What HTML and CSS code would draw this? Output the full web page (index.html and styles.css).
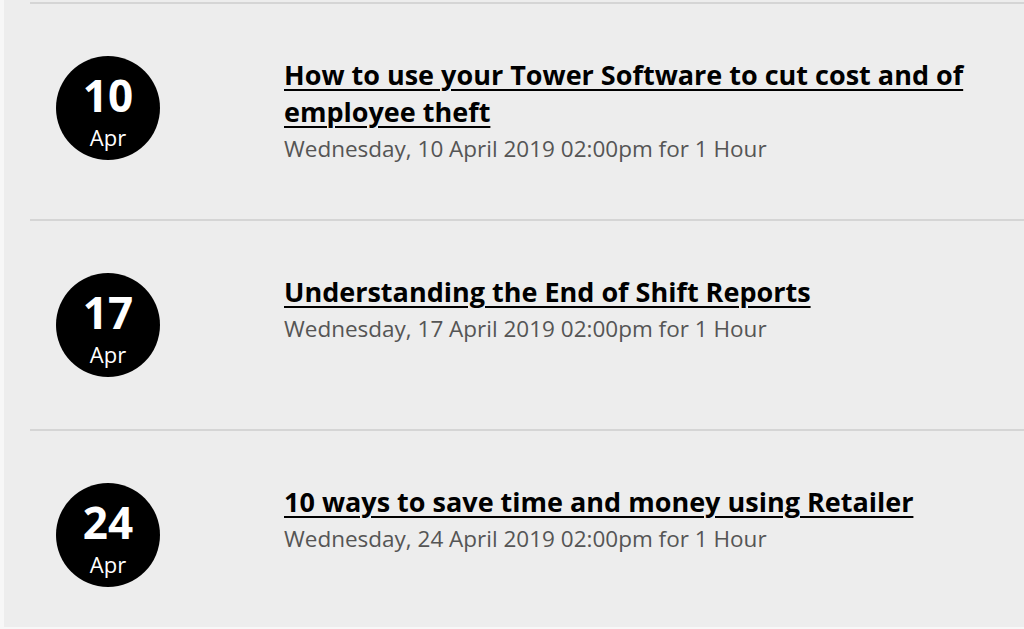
FILE: index.html
```html
<!DOCTYPE html>
<html lang="en">
<head>
  <meta charset="UTF-8" />
  <meta name="viewport" content="width=device-width, initial-scale=1.0"/>
  <title>Upcoming Webinars</title>
  <link rel="stylesheet" href="styles.css">
</head>
<body>

<div class="events">
  <div class="event">
    <div class="date">
      <span class="day">10</span>
      <span class="month">Apr</span>
    </div>
    <div class="info">
      <a href="#" class="title">How to use your Tower Software to cut cost and of employee theft</a>
      <p class="when">Wednesday, 10 April 2019 02:00pm for 1 Hour</p>
    </div>
  </div>

  <div class="event">
    <div class="date">
      <span class="day">17</span>
      <span class="month">Apr</span>
    </div>
    <div class="info">
      <a href="#" class="title">Understanding the End of Shift Reports</a>
      <p class="when">Wednesday, 17 April 2019 02:00pm for 1 Hour</p>
    </div>
  </div>

  <div class="event">
    <div class="date">
      <span class="day">24</span>
      <span class="month">Apr</span>
    </div>
    <div class="info">
      <a href="#" class="title">10 ways to save time and money using Retailer</a>
      <p class="when">Wednesday, 24 April 2019 02:00pm for 1 Hour</p>
    </div>
  </div>
</div>

</body>
</html>
```

FILE: styles.css
```css
body {
  font-family: 'Open Sans', sans-serif;
  background: #f7f7f7;
  margin: 0;
  padding: 0;
}

.events {
  margin-left: 4px;
  background: #ededed;
  padding-top: 2px;
  height: 625px;
  overflow: hidden;
}

.event {
  display: flex;
  align-items: flex-start;
  margin-left: 26px;
  padding: 52px 0 52px 26px;
  border-top: 2px solid #d5d5d5;
}

.date {
  flex: none;
  width: 104px;
  height: 104px;
  border-radius: 50%;
  background: #000;
  color: #fff;
  text-align: center;
  padding-top: 17px;
  box-sizing: border-box;
}

.date .day {
  display: block;
  font-size: 44px;
  line-height: 44px;
  font-weight: 700;
}

.date .month {
  display: block;
  margin-top: 9px;
  font-size: 22px;
  line-height: 22px;
}

.info {
  margin-left: 124px;
}

.title {
  display: block;
  color: #000;
  font-size: 27px;
  line-height: 37px;
  font-weight: 700;
  text-decoration: underline;
  text-decoration-thickness: 2px;
  text-underline-offset: 4px;
}

.when {
  margin: 0;
  color: #555;
  font-size: 22.5px;
  line-height: 37px;
}
```
